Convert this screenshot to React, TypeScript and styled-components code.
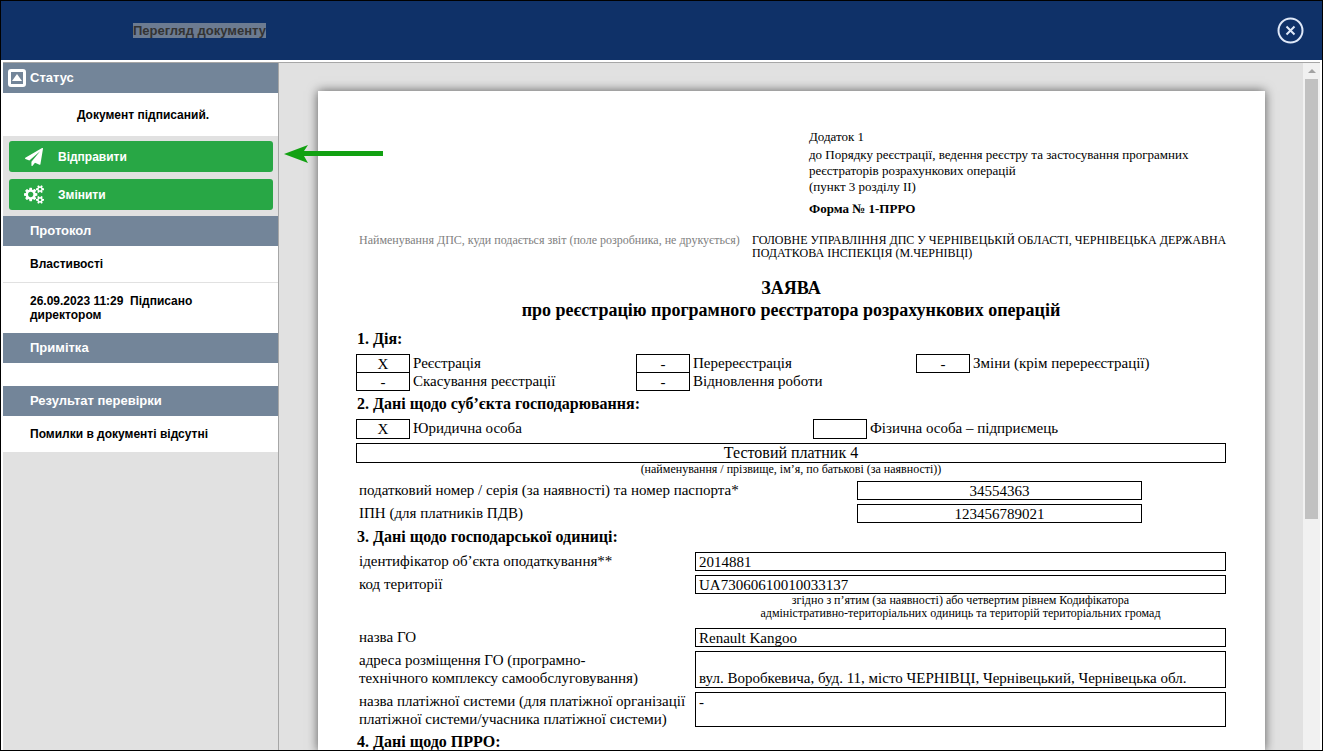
import React from "react";
import styled, { createGlobalStyle } from "styled-components";

const GlobalStyle = createGlobalStyle`
  *, *::before, *::after { box-sizing: border-box; }
  body { margin: 0; background: #fff; font-family: "Liberation Sans", Arial, sans-serif; }
  h1, h2, h3, p { margin: 0; }
  button { font: inherit; border: 0; padding: 0; cursor: pointer; }
`;

const Window = styled.div`
  display: flex;
  flex-direction: column;
  height: 100vh;
  overflow: hidden;
  border: 1px solid #000;
  background: #fff;
`;

const TopBar = styled.header`
  display: flex;
  flex: none;
  align-items: center;
  justify-content: space-between;
  height: 59px;
  padding: 0 18px 0 132px;
  background: #0f3168;
`;

const WindowTitle = styled.h1`
  font-size: 13px;
  line-height: 15px;
  font-weight: bold;
  color: #333;
  background: #6c7b91;
`;

const CloseButton = styled.button`
  display: flex;
  color: #dfe8f8;
  background: none;
`;

const Body = styled.div`
  display: flex;
  flex: 1;
  min-height: 0;
  margin: 2px 2px 0;
  border-top: 1px solid #a6a6a6;
`;

const Sidebar = styled.aside`
  flex: none;
  width: 276px;
  border-right: 1px solid #a6a6a6;
  background: #e1e1e1;
`;

const SectionTitle = styled.h2`
  display: flex;
  align-items: center;
  height: 30px;
  padding-left: 27px;
  font-size: 13px;
  line-height: 16px;
  color: #fff;
  background: #738599;
`;

const CollapseButton = styled.button`
  display: flex;
  width: 18px;
  margin: 0 4px 0 -22px;
  background: none;
`;

const SectionItem = styled.p<{ $divided?: boolean; $centered?: boolean }>`
  padding: ${(p) => (p.$centered ? "15px 0 14px 5px" : "11px 60px 11px 27px")};
  font-size: 12px;
  line-height: 14px;
  font-weight: bold;
  text-align: ${(p) => (p.$centered ? "center" : "left")};
  color: #000;
  background: #fff;
  border-bottom: ${(p) => (p.$divided ? "1px solid #e1e1e1" : "0")};
`;

const EmptyItem = styled.div`
  height: 23px;
  background: #fff;
`;

const Actions = styled.div`
  display: flex;
  flex-direction: column;
  gap: 7px;
  padding: 5px 5px 6px 6px;
`;

const ActionButton = styled.button`
  display: flex;
  align-items: center;
  gap: 14px;
  height: 31px;
  padding-left: 15px;
  font-size: 12px;
  font-weight: bold;
  color: #fff;
  background: #28a745;
  border-radius: 3px;
`;

const Viewer = styled.main`
  position: relative;
  display: flex;
  flex: 1;
  min-width: 0;
  background: #e1e1e1;
`;

const Canvas = styled.div`
  flex: 1;
  min-width: 0;
  overflow: hidden;
  padding: 28px 38px 0 39px;
`;

const PointerArrow = styled.svg`
  position: absolute;
  left: 5px;
  top: 82px;
`;

const ScrollTrack = styled.div`
  display: flex;
  flex: none;
  flex-direction: column;
  align-items: center;
  width: 17px;
  background: #f1f1f1;
`;

const ScrollUp = styled.button`
  display: flex;
  align-items: center;
  justify-content: center;
  width: 17px;
  height: 16px;
  background: none;
`;

const ScrollThumb = styled.div`
  width: 13px;
  height: 64%;
  background: #c1c1c1;
`;

const Paper = styled.article`
  min-height: 100%;
  padding: 36px 39px 0 38px;
  font-family: "Liberation Serif", "Times New Roman", serif;
  font-size: 15px;
  line-height: 18px;
  color: #000;
  background: #fff;
  box-shadow: 0 0 10px rgba(0, 0, 0, 0.6);
`;

const Appendix = styled.div`
  padding-left: 453px;
  font-size: 13px;
  line-height: 16px;
`;

const AppendixNumber = styled.p`
  line-height: 20px;
`;

const FormCode = styled.p`
  margin-top: 6px;
  font-weight: bold;
`;

const Recipient = styled.div`
  display: grid;
  grid-template-columns: 393px 1fr;
  margin-top: 17px;
  padding-left: 3px;
  font-size: 12px;
  line-height: 13px;
  white-space: nowrap;
`;

const Hint = styled.span`
  color: #808080;
`;

const DocTitle = styled.h2`
  margin: 17px 0 9px;
  font-size: 18px;
  line-height: 22px;
  text-align: center;
`;

const DocSection = styled.h3`
  margin: 5px 0 6px;
  padding-left: 1px;
  font-size: 16px;
  line-height: 18px;
`;

const Options = styled.div<{ $columns: string }>`
  display: grid;
  grid-template-columns: ${(p) => p.$columns};
  margin-bottom: 4px;
`;

const Option = styled.div<{ $height: number }>`
  display: flex;
  gap: 3px;
  height: ${(p) => p.$height}px;
  line-height: 18px;
`;

const Mark = styled.span<{ $height: number }>`
  flex: none;
  width: 54px;
  height: ${(p) => p.$height}px;
  border: 1px solid #000;
  text-align: center;
`;

const PayerName = styled.div`
  height: 20px;
  border: 1px solid #000;
  font-size: 16px;
  line-height: 18px;
  text-align: center;
`;

const Caption = styled.p<{ $tall?: boolean }>`
  padding-bottom: ${(p) => (p.$tall ? 4 : 0)}px;
  font-size: 12px;
  line-height: ${(p) => (p.$tall ? 13 : 12)}px;
  text-align: center;
`;

const FieldRow = styled.div<{ $short?: boolean }>`
  display: grid;
  grid-template-columns: ${(p) => (p.$short ? "501px 1fr" : "339px 1fr")};
  margin-bottom: 4px;
  padding-right: ${(p) => (p.$short ? 84 : 0)}px;
`;

const FieldLabel = styled.span`
  padding-left: 3px;
`;

const FieldValue = styled.div<{ $height?: number; $center?: boolean; $bottom?: boolean }>`
  display: flex;
  align-items: ${(p) => (p.$bottom ? "flex-end" : "flex-start")};
  justify-content: ${(p) => (p.$center ? "center" : "flex-start")};
  height: ${(p) => p.$height ?? 19}px;
  padding: 0 3px;
  border: 1px solid #000;
`;

const TaxFields = styled.div`
  margin-top: 6px;
`;

type OptionItem = { mark: string; label: string };

const actions: OptionItem[] = [
  { mark: "X", label: "Реєстрація" },
  { mark: "-", label: "Перереєстрація" },
  { mark: "-", label: "Зміни (крім перереєстрації)" },
  { mark: "-", label: "Скасування реєстрації" },
  { mark: "-", label: "Відновлення роботи" },
];

const subjects: OptionItem[] = [
  { mark: "X", label: "Юридична особа" },
  { mark: "", label: "Фізична особа – підприємець" },
];

function OptionGrid({ items, columns, rowHeight, markHeight }: {
  items: OptionItem[];
  columns: string;
  rowHeight: number;
  markHeight: number;
}) {
  return (
    <Options $columns={columns}>
      {items.map((item) => (
        <Option key={item.label} $height={rowHeight}>
          <Mark $height={markHeight}>{item.mark}</Mark>
          <span>{item.label}</span>
        </Option>
      ))}
    </Options>
  );
}

function PlaneIcon() {
  return (
    <svg width="20" height="18" viewBox="0 0 1792 1792" fill="currentColor" aria-hidden="true">
      <path d="M1764 11q33 24 27 64l-256 1536q-5 29-32 45-14 8-31 8-11 0-24-5l-453-185-242 295q-18 23-49 23-13 0-22-4-19-7-30.500-23.500t-11.500-36.500v-349l864-1059-1069 925-395-162q-37-14-40-55-2-40 32-59l1664-960q15-9 32-9 20 0 36 11z" />
    </svg>
  );
}

function CogsIcon() {
  return (
    <svg width="20" height="19" viewBox="0 0 1920 1792" fill="currentColor" aria-hidden="true">
      <path d="M896 896q0-106-75-181t-181-75-181 75-75 181 75 181 181 75 181-75 75-181zm768 512q0-52-38-90t-90-38-90 38-38 90q0 53 37.500 90.500t90.500 37.500 90.500-37.500 37.500-90.500zm0-1024q0-52-38-90t-90-38-90 38-38 90q0 53 37.500 90.500t90.500 37.500 90.500-37.500 37.500-90.500zm-384 421v185q0 10-7 19.500t-16 10.500l-155 24q-11 35-32 76 34 48 90 115 7 11 7 20 0 12-7 19-23 30-82.500 89.500t-78.500 59.500q-11 0-21-7l-115-90q-37 19-77 31-11 108-23 155-7 24-30 24h-186q-11 0-20-7.500t-10-17.500l-23-153q-34-10-75-31l-118 89q-7 7-20 7-11 0-21-8-144-133-144-160 0-9 7-19 10-14 41-53t47-61q-23-44-35-82l-152-24q-10-1-17-9.500t-7-19.500v-185q0-10 7-19.500t16-10.500l155-24q11-35 32-76-34-48-90-115-7-11-7-20 0-12 7-20 22-30 82-89t79-59q11 0 21 7l115 90q34-18 77-32 11-108 23-154 7-24 30-24h186q11 0 20 7.500t10 17.500l23 153q34 10 75 31l118-89q8-7 20-7 11 0 21 8 144 133 144 160 0 8-7 19-12 16-42 54t-45 60q23 48 34 82l152 23q10 2 17 10.500t7 19.500zm640 533v140q0 16-149 31-12 27-30 52 51 113 51 138 0 4-4 7-122 71-124 71-8 0-46-47t-52-68q-20 2-30 2t-30-2q-14 21-52 68t-46 47q-2 0-124-71-4-3-4-7 0-25 51-138-18-25-30-52-149-15-149-31v-140q0-16 149-31 13-29 30-52-51-113-51-138 0-4 4-7 4-2 35-20t59-34 30-16q8 0 46 46.500t52 67.500q20-2 30-2t30 2q51-71 92-112l6-2q4 0 124 70 4 3 4 7 0 25-51 138 17 23 30 52 149 15 149 31zm0-1024v140q0 16-149 31-12 27-30 52 51 113 51 138 0 4-4 7-122 71-124 71-8 0-46-47t-52-68q-20 2-30 2t-30-2q-14 21-52 68t-46 47q-2 0-124-71-4-3-4-7 0-25 51-138-18-25-30-52-149-15-149-31v-140q0-16 149-31 13-29 30-52-51-113-51-138 0-4 4-7 4-2 35-20t59-34 30-16q8 0 46 46.500t52 67.500q20-2 30-2t30 2q51-71 92-112l6-2q4 0 124 70 4 3 4 7 0 25-51 138 17 23 30 52 149 15 149 31z" />
    </svg>
  );
}

export default function App() {
  return (
    <Window>
      <GlobalStyle />
      <TopBar>
        <WindowTitle>Перегляд документу</WindowTitle>
        <CloseButton type="button" aria-label="Закрити">
          <svg width="27" height="27" viewBox="0 0 27 27" fill="none" stroke="currentColor" strokeWidth="2">
            <circle cx="13.5" cy="13.5" r="12" />
            <path d="M9.5 9.5l8 8M17.5 9.5l-8 8" />
          </svg>
        </CloseButton>
      </TopBar>
      <Body>
        <Sidebar>
          <SectionTitle>
            <CollapseButton type="button" aria-label="Згорнути">
              <svg width="18" height="18" viewBox="0 0 18 18">
                <rect x="1.5" y="1.5" width="15" height="15" rx="1.5" fill="none" stroke="#fff" strokeWidth="3" />
                <path d="M9 5l5 7H4z" fill="#fff" />
              </svg>
            </CollapseButton>
            Статус
          </SectionTitle>
          <SectionItem $centered>Документ підписаний.</SectionItem>
          <Actions>
            <ActionButton type="button">
              <PlaneIcon />
              Відправити
            </ActionButton>
            <ActionButton type="button">
              <CogsIcon />
              Змінити
            </ActionButton>
          </Actions>
          <SectionTitle>Протокол</SectionTitle>
          <SectionItem $divided>Властивості</SectionItem>
          <SectionItem>26.09.2023 11:29&nbsp; Підписано директором</SectionItem>
          <SectionTitle>Примітка</SectionTitle>
          <EmptyItem />
          <SectionTitle>Результат перевірки</SectionTitle>
          <SectionItem>Помилки в документі відсутні</SectionItem>
        </Sidebar>
        <Viewer>
          <Canvas>
            <Paper>
              <Appendix>
                <AppendixNumber>Додаток 1</AppendixNumber>
                <p>
                  до Порядку реєстрації, ведення реєстру та застосування програмних
                  <br />
                  реєстраторів розрахункових операцій
                  <br />
                  (пункт 3 розділу II)
                </p>
                <FormCode>Форма № 1-ПРРО</FormCode>
              </Appendix>
              <Recipient>
                <Hint>Найменування ДПС, куди подається звіт (поле розробника, не друкується)</Hint>
                <span>
                  ГОЛОВНЕ УПРАВЛІННЯ ДПС У ЧЕРНІВЕЦЬКІЙ ОБЛАСТІ, ЧЕРНІВЕЦЬКА ДЕРЖАВНА
                  <br />
                  ПОДАТКОВА ІНСПЕКЦІЯ (М.ЧЕРНІВЦІ)
                </span>
              </Recipient>
              <DocTitle>
                ЗАЯВА
                <br />
                про реєстрацію програмного реєстратора розрахункових операцій
              </DocTitle>
              <DocSection>1. Дія:</DocSection>
              <OptionGrid items={actions} columns="280px 280px 1fr" rowHeight={18} markHeight={19} />
              <DocSection>2. Дані щодо суб’єкта господарювання:</DocSection>
              <OptionGrid items={subjects} columns="457px 1fr" rowHeight={20} markHeight={20} />
              <PayerName>Тестовий платник 4</PayerName>
              <Caption>(найменування / прізвище, ім’я, по батькові (за наявності))</Caption>
              <TaxFields>
                <FieldRow $short>
                  <FieldLabel>податковий номер / серія (за наявності) та номер паспорта*</FieldLabel>
                  <FieldValue $center>34554363</FieldValue>
                </FieldRow>
                <FieldRow $short>
                  <FieldLabel>ІПН (для платників ПДВ)</FieldLabel>
                  <FieldValue $center>123456789021</FieldValue>
                </FieldRow>
              </TaxFields>
              <DocSection>3. Дані щодо господарської одиниці:</DocSection>
              <FieldRow>
                <FieldLabel>ідентифікатор об’єкта оподаткування**</FieldLabel>
                <FieldValue>2014881</FieldValue>
              </FieldRow>
              <FieldRow>
                <FieldLabel>код території</FieldLabel>
                <div>
                  <FieldValue>UA73060610010033137</FieldValue>
                  <Caption $tall>
                    згідно з п’ятим (за наявності) або четвертим рівнем Кодифікатора
                    <br />
                    адміністративно-територіальних одиниць та територій територіальних громад
                  </Caption>
                </div>
              </FieldRow>
              <FieldRow>
                <FieldLabel>назва ГО</FieldLabel>
                <FieldValue>Renault Kangoo</FieldValue>
              </FieldRow>
              <FieldRow>
                <FieldLabel>
                  адреса розміщення ГО (програмно-
                  <br />
                  технічного комплексу самообслуговування)
                </FieldLabel>
                <FieldValue $height={37} $bottom>
                  вул. Воробкевича, буд. 11, місто ЧЕРНІВЦІ, Чернівецький, Чернівецька обл.
                </FieldValue>
              </FieldRow>
              <FieldRow>
                <FieldLabel>
                  назва платіжної системи (для платіжної організації
                  <br />
                  платіжної системи/учасника платіжної системи)
                </FieldLabel>
                <FieldValue $height={35}>-</FieldValue>
              </FieldRow>
              <DocSection>4. Дані щодо ПРРО:</DocSection>
            </Paper>
          </Canvas>
          <ScrollTrack>
            <ScrollUp type="button" aria-label="Прокрутити вгору">
              <svg width="8" height="4" viewBox="0 0 8 4">
                <path d="M4 0l4 4H0z" fill="#a3a3a3" />
              </svg>
            </ScrollUp>
            <ScrollThumb />
          </ScrollTrack>
          <PointerArrow width="99" height="18" viewBox="0 0 99 18" fill="#12a112">
            <path d="M0 9L24 0L20 6H99V11H20L24 18z" />
          </PointerArrow>
        </Viewer>
      </Body>
    </Window>
  );
}
